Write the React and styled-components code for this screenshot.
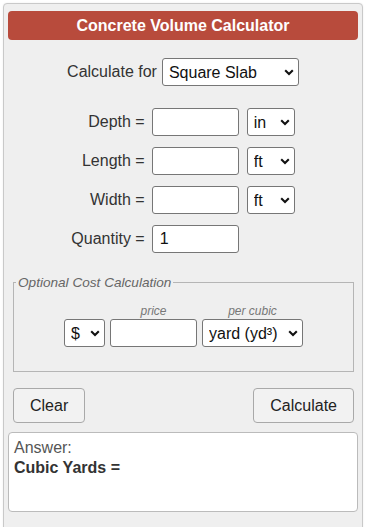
import React from 'react'
import styled, { createGlobalStyle } from 'styled-components'

const GlobalStyle = createGlobalStyle`
  body {
    margin: 0;
    background: #fff;
    font-family: "Liberation Sans", Arial, sans-serif;
    color: #333;
  }
`

const Chevron = () => (
  <svg width="10" height="7" viewBox="0 0 10 7">
    <path d="M1.2 1.3 L5 5 L8.8 1.3" fill="none" stroke="#111" strokeWidth="2.1" />
  </svg>
)

function Select({ width, value }) {
  return (
    <SelectWrap>
      <StyledSelect $width={width} defaultValue={value}>
        <option>{value}</option>
      </StyledSelect>
      <Arrow><Chevron /></Arrow>
    </SelectWrap>
  )
}

export default function App() {
  const rows = [
    { label: 'Depth =', unit: 'in' },
    { label: 'Length =', unit: 'ft' },
    { label: 'Width =', unit: 'ft' },
  ]
  return (
    <>
      <GlobalStyle />
      <Panel>
        <Title>Concrete Volume Calculator</Title>
        <ShapeRow>
          <span>Calculate for</span>
          <Select width={137} value="Square Slab" />
        </ShapeRow>
        <Grid>
          {rows.map(r => (
            <React.Fragment key={r.label}>
              <Label>{r.label}</Label>
              <TextInput />
              <Select width={48} value={r.unit} />
            </React.Fragment>
          ))}
          <Label>Quantity =</Label>
          <TextInput defaultValue="1" />
          <span />
        </Grid>
        <CostBox>
          <legend>Optional Cost Calculation</legend>
          <CostRow>
            <CostCol>
              <SmallLabel>&nbsp;</SmallLabel>
              <Select width={41} value="$" />
            </CostCol>
            <CostCol>
              <SmallLabel>price</SmallLabel>
              <TextInput $width={87} />
            </CostCol>
            <CostCol>
              <SmallLabel>per cubic</SmallLabel>
              <Select width={101} value="yard (yd³)" />
            </CostCol>
          </CostRow>
        </CostBox>
        <Buttons>
          <Button>Clear</Button>
          <Button>Calculate</Button>
        </Buttons>
        <Answer>
          <AnswerHead>Answer:</AnswerHead>
          <AnswerLine>Cubic Yards =</AnswerLine>
        </Answer>
      </Panel>
    </>
  )
}

const Panel = styled.div`
  box-sizing: border-box;
  width: 360px;
  min-height: 540px;
  margin: 3px 0 0 3px;
  padding: 7px 4px 14px;
  background: #efefef;
  border: 1px solid #c9c9c9;
  border-radius: 4px;
  box-shadow: 0 0 2px rgba(0, 0, 0, 0.08);
`

const Title = styled.div`
  height: 29px;
  line-height: 29px;
  background: #b84b3c;
  border-radius: 4px;
  color: #fff;
  font-weight: bold;
  font-size: 16px;
  text-align: center;
`

const ShapeRow = styled.div`
  display: flex;
  justify-content: center;
  align-items: center;
  gap: 5px;
  margin-top: 18px;
  font-size: 16px;
`

const SelectWrap = styled.div`
  position: relative;
  display: inline-block;
`

const StyledSelect = styled.select`
  appearance: none;
  box-sizing: border-box;
  width: ${p => p.$width}px;
  height: 28px;
  padding: 0 0 0 6px;
  border: 1px solid #767676;
  border-radius: 3px;
  background: #fff;
  color: #111;
  font-family: "Liberation Sans", Arial, sans-serif;
  font-size: 16px;
  display: block;
`

const Arrow = styled.span`
  position: absolute;
  right: 5px;
  top: 11px;
  line-height: 0;
  pointer-events: none;
`

const Grid = styled.div`
  display: grid;
  grid-template-columns: auto auto auto;
  justify-content: center;
  align-items: center;
  column-gap: 8px;
  row-gap: 11px;
  margin-top: 22px;
`

const Label = styled.span`
  text-align: right;
  font-size: 16px;
  margin-right: -1px;
`

const TextInput = styled.input`
  box-sizing: border-box;
  width: ${p => p.$width || 87}px;
  height: 28px;
  padding: 0 7px;
  border: 1px solid #767676;
  border-radius: 3px;
  background: #fff;
  color: #111;
  font-family: "Liberation Sans", Arial, sans-serif;
  font-size: 16px;
`

const CostBox = styled.fieldset`
  margin: 22px 4px 0 5px;
  padding: 14px 2px 24px;
  border: 1px solid #b5b5b5;
  & legend {
    padding: 0 2px;
    font-size: 13.6px;
    font-style: italic;
    color: #666;
  }
`

const CostRow = styled.div`
  display: flex;
  justify-content: center;
  gap: 5px;
`

const CostCol = styled.div`
  display: flex;
  flex-direction: column;
  align-items: center;
`

const SmallLabel = styled.span`
  font-size: 12px;
  line-height: 15px;
  font-style: italic;
  color: #777;
`

const Buttons = styled.div`
  display: flex;
  justify-content: space-between;
  margin: 16px 4px 0 5px;
`

const Button = styled.button`
  height: 35px;
  padding: 0 16px;
  background: #f2f2f2;
  border: 1px solid #a9a9a9;
  border-radius: 4px;
  color: #222;
  font-family: "Liberation Sans", Arial, sans-serif;
  font-size: 16px;
`

const Answer = styled.div`
  box-sizing: border-box;
  height: 80px;
  margin-top: 9px;
  padding: 5px 5px;
  background: #fff;
  border: 1px solid #bbb;
  border-radius: 4px;
  font-size: 16px;
  line-height: 20px;
`

const AnswerHead = styled.div`
  color: #555;
`

const AnswerLine = styled.div`
  font-weight: bold;
  color: #333;
`
